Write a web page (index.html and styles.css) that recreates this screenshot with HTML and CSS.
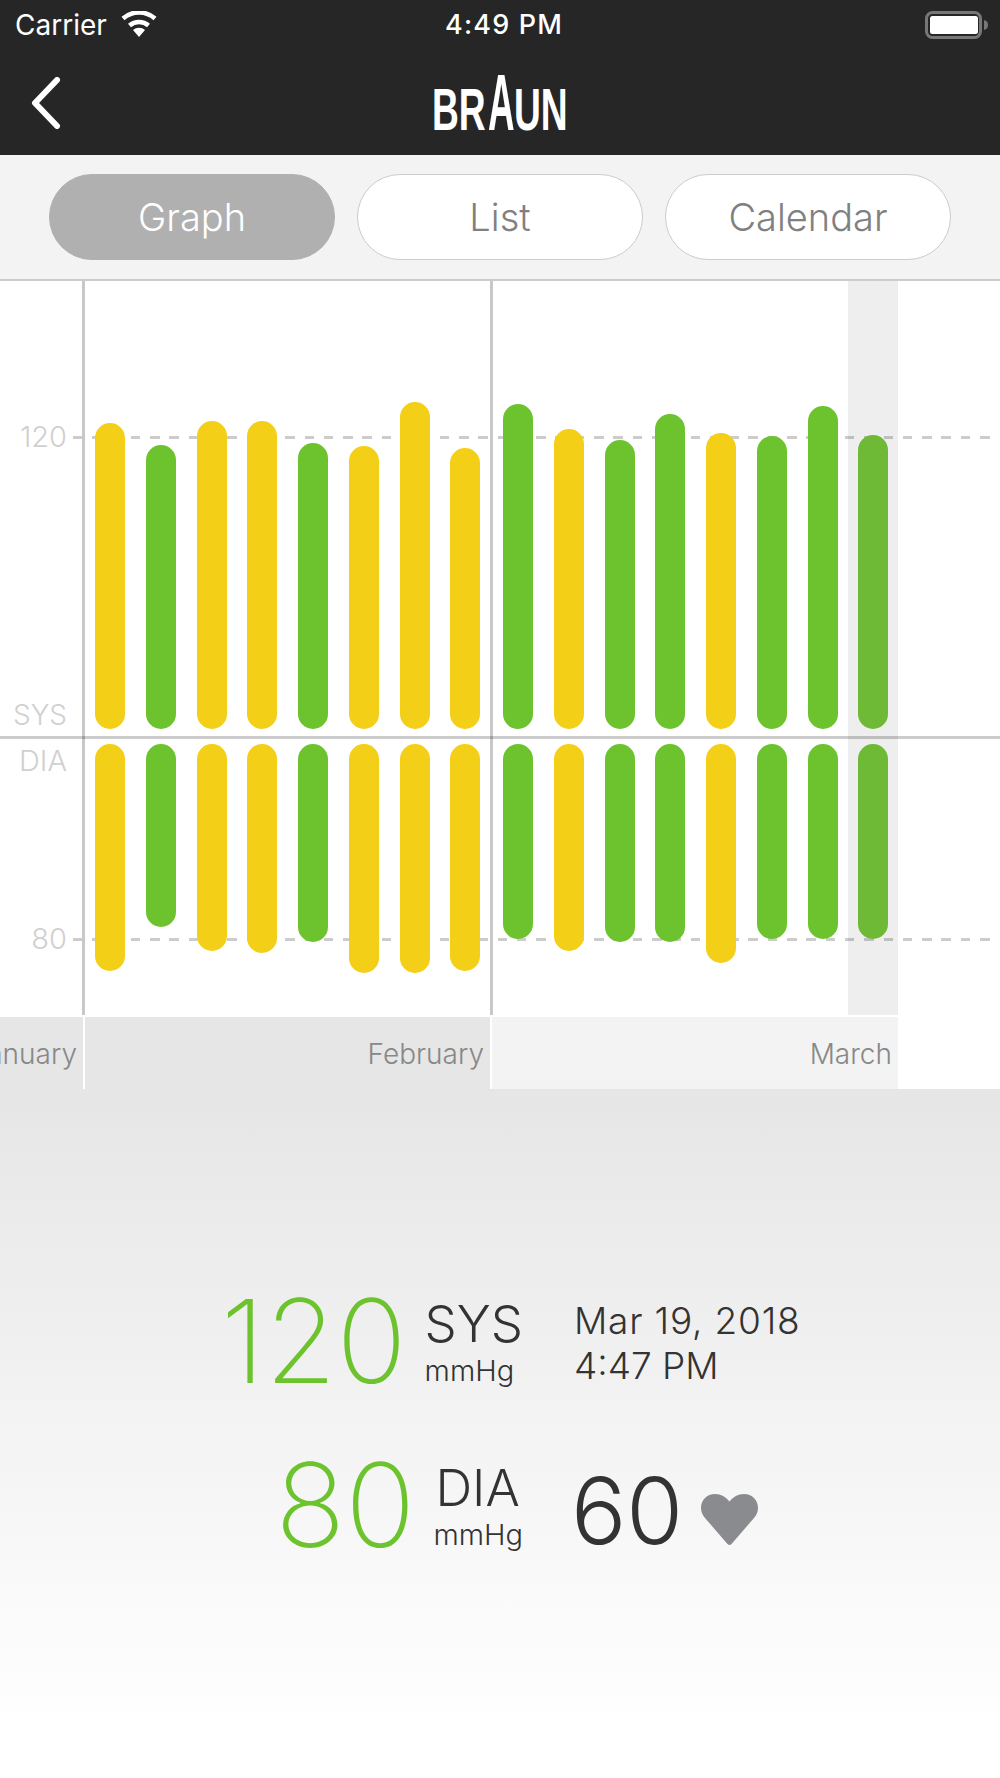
FILE: index.html
```html
<!DOCTYPE html>
<html>
<head>
	<title>Braun Blood Pressure</title>
	<link rel="stylesheet" href="styles.css">
</head>
<body>
	<div class="top-bar">
		<div class="status-bar">
			<div class="status-left">
				<span>Carrier</span>
				<svg class="wifi" width="36" height="26" viewBox="0 0 36 26">
					<path d="M18 26l-6-7a9 9 0 0 1 12 0z" fill="#fff"/>
					<path d="M8.500 14.500a14.500 14.500 0 0 1 19 0" fill="none" stroke="#fff" stroke-width="4.500"/>
					<path d="M2 7.500a24 24 0 0 1 32 0" fill="none" stroke="#fff" stroke-width="4.500"/>
				</svg>
			</div>
			<span class="status-time">4:49 PM</span>
			<svg class="battery" width="63" height="28" viewBox="0 0 63 28">
				<rect x="1.500" y="1.500" width="54" height="25" rx="6" fill="none" stroke="#777" stroke-width="3"/>
				<rect x="5" y="5" width="48" height="18" rx="2.500" fill="#fff"/>
				<path d="M59 9c3 .8 4 2.500 4 5s-1 4.200-4 5z" fill="#777"/>
			</svg>
		</div>
		<div class="nav-bar">
			<svg class="back" width="30" height="52" viewBox="0 0 30 52">
				<path d="M26 3L4 26l22 23" fill="none" stroke="#fff" stroke-width="6" stroke-linecap="round" stroke-linejoin="round"/>
			</svg>
			<svg class="logo" width="136" height="60" viewBox="0 0 136 60" role="img" aria-label="Braun">
				<text class="logo-text" transform="translate(0 58) scale(.62 1)" font-size="60">BR</text>
				<text class="logo-text" transform="translate(56 58) scale(.46 1)" font-size="80">A</text>
				<text class="logo-text" transform="translate(82 58) scale(.62 1)" font-size="60">UN</text>
			</svg>
		</div>
	</div>

	<div class="tabs">
		<div class="tab active">Graph</div>
		<div class="tab">List</div>
		<div class="tab">Calendar</div>
	</div>

	<div class="chart">
		<div class="highlight"></div>
		<div class="grid-v first"></div>
		<div class="grid-v second"></div>
		<div class="grid-h"></div>
		<div class="dash dash-120"></div>
		<div class="dash dash-80"></div>
		<span class="axis axis-120">120</span>
		<span class="axis axis-sys">SYS</span>
		<span class="axis axis-dia">DIA</span>
		<span class="axis axis-80">80</span>

		<div class="bars sys" id="sys"></div>
		<div class="bars dia" id="dia"></div>
	</div>

	<div class="months">
		<div class="month january">January</div>
		<div class="month february">February</div>
		<div class="month march">March</div>
	</div>

	<div class="summary">
		<div class="stat-row">
			<div class="reading">
				<span class="value">120</span>
				<div class="label">
					<div class="label-name">SYS</div>
					<div class="label-unit">mmHg</div>
				</div>
			</div>
			<div class="date">
				<div class="date-day">Mar 19, 2018</div>
				<div>4:47 PM</div>
			</div>
		</div>
		<div class="stat-row">
			<div class="reading">
				<span class="value">80</span>
				<div class="label dia-label">
					<div class="label-name">DIA</div>
					<div class="label-unit">mmHg</div>
				</div>
			</div>
			<div class="pulse">
				<span class="pulse-value">60</span>
				<svg class="heart" width="57" height="51" viewBox="0 0 57 51">
					<path d="M26.500 50L4 24C1 20.500 0 17 0 14 0 6 6 0 14 0c6 0 11 3 14.500 7.500C32 3 37 0 43 0c8 0 14 6 14 14 0 3-1 6.500-4 10L30.500 50c-1.200 1.300-2.800 1.300-4 0z" fill="#8a8b8e"/>
				</svg>
			</div>
		</div>
	</div>

	<script>
		// top of sys bar and bottom of dia bar, page y
		const readings = [
			[423, 971, 'y'], [445, 927, 'g'], [421, 951, 'y'], [421, 953, 'y'],
			[443, 942, 'g'], [446, 973, 'y'], [402, 973, 'y'], [448, 971, 'y'],
			[404, 939, 'g'], [429, 951, 'y'], [440, 942, 'g'], [414, 942, 'g'],
			[433, 963, 'y'], [436, 939, 'g'], [406, 939, 'g'], [435, 939, 's']
		];
		const sysRow = document.getElementById('sys');
		const diaRow = document.getElementById('dia');

		readings.forEach((r, i) => {
			const sysBar = document.createElement('div');
			const diaBar = document.createElement('div');
			sysBar.className = diaBar.className = 'bar bar-' + r[2] + (i === 8 ? ' next-month' : '');
			sysBar.style.height = (729 - r[0]) + 'px';
			diaBar.style.height = (r[1] - 744) + 'px';
			sysRow.appendChild(sysBar);
			diaRow.appendChild(diaBar);
		});
	</script>
</body>
</html>
```

FILE: styles.css
```css
* {
	box-sizing: border-box;
}

body {
	margin: 0;
	height: 1778px;
	overflow: hidden;
	background: #fff;
	font-family: "Inter", "Liberation Sans", sans-serif;
}

.top-bar {
	height: 155px;
	background: #262626;
	color: #fff;
}

.status-bar {
	height: 50px;
	padding: 0 12px 0 15px;
	display: flex;
	align-items: center;
	justify-content: space-between;
	font-size: 28px;
	position: relative;
}

.status-left {
	display: flex;
	align-items: center;
	gap: 14px;
}

.status-time {
	position: absolute;
	left: 445px;
	top: 8px;
	font-size: 27px;
	font-weight: 500;
	letter-spacing: 1.2px;
}

.wifi {
	margin-top: -2px;
}

.nav-bar {
	height: 105px;
	padding: 27px 0 0 31px;
	position: relative;
}

.back {
	display: block;
}

.logo {
	position: absolute;
	left: 432px;
	top: 22px;
	overflow: visible;
}

.logo-text {
	font-family: "Liberation Sans", sans-serif;
	font-weight: bold;
	fill: #fff;
}

.tabs {
	height: 126px;
	padding: 19px 49px 0;
	display: flex;
	gap: 22px;
	background: #f3f3f3;
	border-bottom: 2px solid #ccc;
}

.tab {
	width: 286px;
	height: 86px;
	border: 1px solid #ccc;
	border-radius: 43px;
	background: #fff;
	color: #808080;
	font-size: 38px;
	font-weight: 300;
	display: flex;
	align-items: center;
	justify-content: center;
}

.tab.active {
	background: #b0b0b0;
	border-color: #b0b0b0;
	color: #fff;
}

.chart {
	height: 736px;
	position: relative;
	overflow: hidden;
}

.highlight {
	position: absolute;
	left: 848px;
	top: 0;
	width: 50px;
	height: 734px;
	background: #eee;
}

.grid-v {
	position: absolute;
	top: 0;
	width: 3px;
	height: 734px;
	background: #c8c8c8;
}

.grid-v.first {
	left: 82px;
}

.grid-v.second {
	left: 490px;
}

.grid-h {
	position: absolute;
	left: 0;
	right: 0;
	top: 455px;
	height: 3px;
	background: rgba(0, 0, 0, .2);
}

.dash {
	position: absolute;
	left: 73px;
	width: 918px;
	height: 3px;
	background: repeating-linear-gradient(to right, rgba(0, 0, 0, .2) 0 9.5px, transparent 9.5px 19.3px);
}

.dash-120 {
	top: 155px;
}

.dash-80 {
	top: 657px;
}

.axis {
	position: absolute;
	right: 933px;
	color: #d0d0d0;
	font-size: 29px;
	font-weight: 300;
	line-height: 30px;
}

.axis-120 {
	top: 141px;
}

.axis-sys {
	top: 419px;
	font-size: 28px;
}

.axis-dia {
	top: 465px;
}

.axis-80 {
	top: 643px;
}

.bars {
	display: flex;
	gap: 20.75px;
	padding-left: 95px;
	position: relative;
}

.bars.sys {
	height: 448px;
	align-items: flex-end;
}

.bars.dia {
	margin-top: 15px;
	align-items: flex-start;
}

.bar {
	width: 30px;
	flex: none;
	border-radius: 15px;
}

.bar.next-month {
	margin-left: 2px;
}

.bar-y {
	background: #f4cf17;
}

.bar-g {
	background: #6dc32d;
}

.bar-s {
	background: #6eb936;
}

.months {
	height: 72px;
	display: flex;
	gap: 2px;
	color: #888;
	font-size: 28px;
	font-weight: 300;
}

.month {
	padding: 2px 6px 0 0;
	display: flex;
	align-items: center;
	justify-content: flex-end;
	white-space: nowrap;
	background: #e6e6e6;
}

.january {
	width: 83px;
	overflow: hidden;
}

.february {
	width: 405px;
}

.march {
	width: 406px;
	background: #f3f3f3;
}

.summary {
	height: 689px;
	padding-top: 192px;
	background: linear-gradient(to bottom, #e6e6e6, #fff 93%);
	color: #333;
}

.stat-row {
	height: 164px;
	display: flex;
	gap: 51px;
}

.reading {
	width: 523px;
	display: flex;
	justify-content: flex-end;
	align-items: flex-start;
	gap: 18px;
}

.value {
	color: #6dc32d;
	font-size: 116px;
	font-weight: 250;
	line-height: 120px;
}

.label-name {
	font-size: 51px;
	font-weight: 300;
	line-height: 60px;
	margin-top: 13px;
}

.label-unit {
	font-size: 29px;
	font-weight: 300;
	line-height: 34px;
}

.dia-label {
	padding-left: 2px;
}

.dia-label .label-unit {
	margin-left: -2px;
}

.date {
	font-size: 37px;
	font-weight: 300;
	line-height: 45px;
	margin-top: 17px;
}

.date-day {
	letter-spacing: .8px;
}

.pulse {
	display: flex;
	align-items: flex-start;
	gap: 18px;
	margin-left: -3px;
}

.pulse-value {
	font-size: 92px;
	font-weight: 300;
	line-height: 110px;
	margin-top: 11px;
}

.heart {
	margin-top: 49px;
}
```
